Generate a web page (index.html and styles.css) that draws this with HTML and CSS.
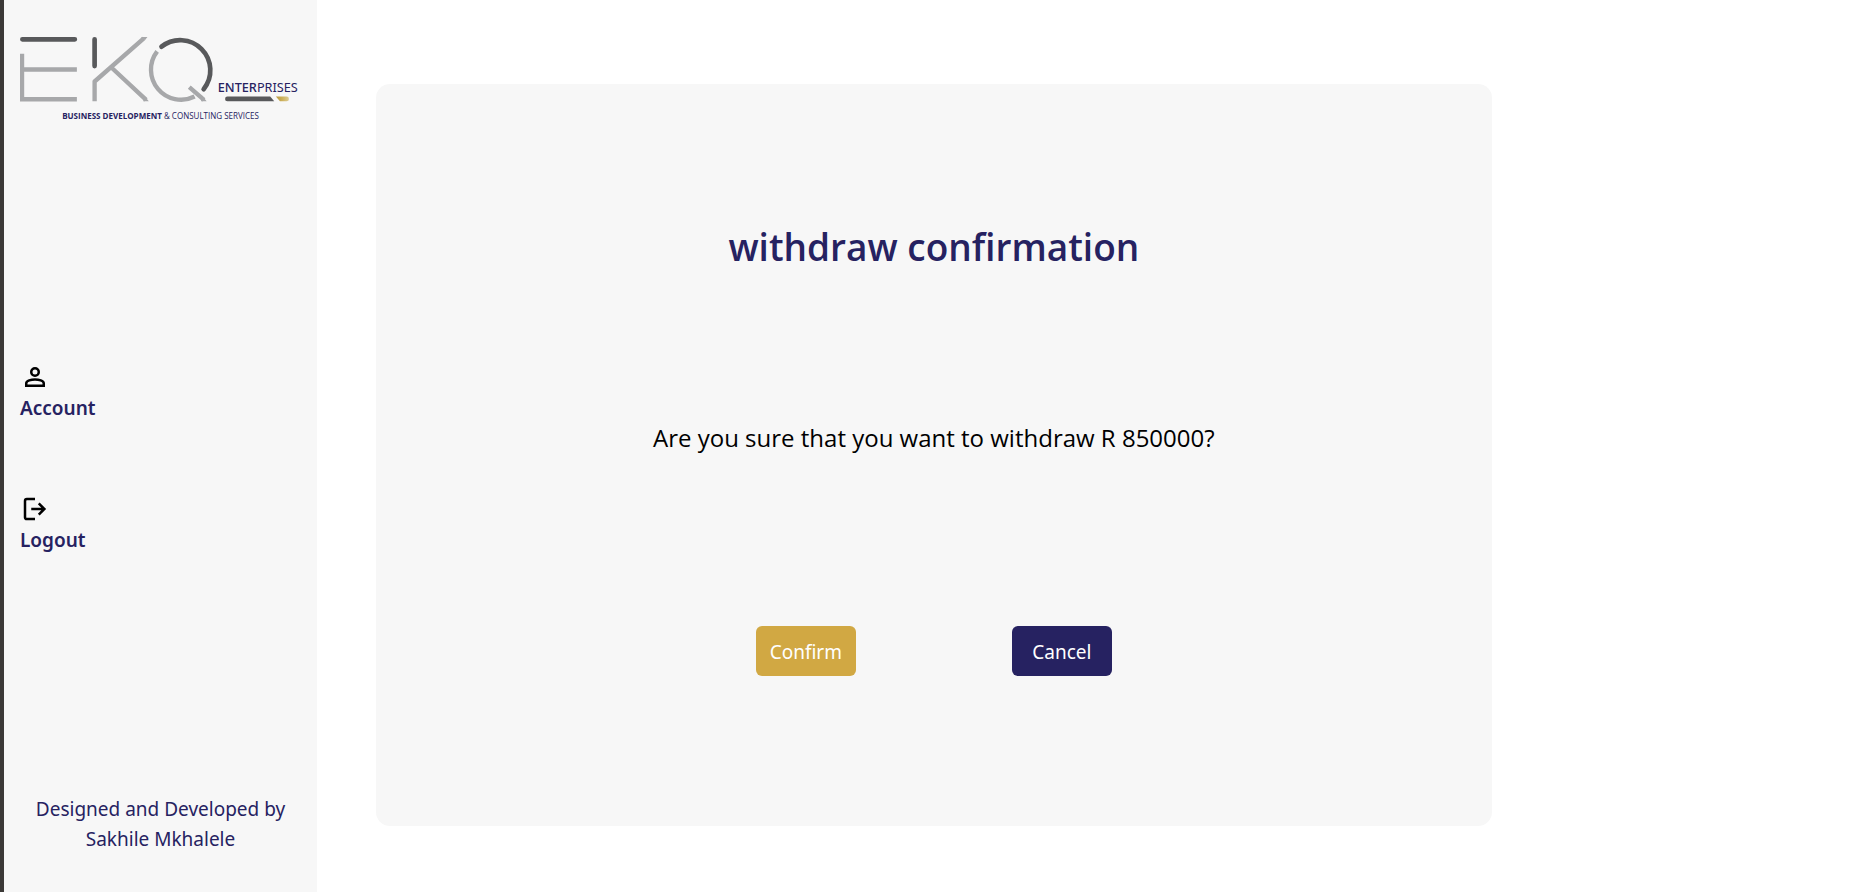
FILE: index.html
```html
<!DOCTYPE html>
<html lang="en">
<head>
<meta charset="utf-8">
<meta name="viewport" content="width=device-width, initial-scale=1">
<title>Withdraw confirmation</title>
<link rel="stylesheet" href="styles.css">
</head>
<body>
<aside class="sidebar">
  <svg class="logo" viewBox="60 45 840 260" role="img" aria-label="EKQ Enterprises">
    <defs>
      <linearGradient id="gold" x1="0" x2="1"><stop offset="0" stop-color="#b8983e"/><stop offset=".5" stop-color="#cdb15c"/><stop offset="1" stop-color="#dccb94"/></linearGradient>
    </defs>
    <g fill="none" stroke="#a7a8aa" stroke-width="13">
      <path d="M66 101V237H230M66 148H230"/>
      <path d="M283 243V184L430 55M334 143L437 239" stroke-linejoin="round"/>
      <path d="M470 94A90 90 0 0 0 582 229M566 201L610 239"/>
      <path fill="#a7a8aa" stroke="none" d="M421 51H441L434 60ZM433 228L445 243H428ZM604 226L618 243H601Z"/>
    </g>
    <g fill="none" stroke="#58595b" stroke-width="14" stroke-linecap="round">
      <path d="M67 58H224M283 58V138M483 80A90 90 0 0 1 609 207"/>
    </g>
    <path fill="#58595b" d="M680 229H808L820 243H680A7 7 0 0 1 680 229Z"/>
    <path fill="url(#gold)" d="M825 229H857A7 7 0 0 1 857 243H837Z"/>
    <text class="logo-name" x="651" y="216"><tspan class="strong">ENTER</tspan>PRISES</text>
    <text class="logo-tagline" x="186" y="297"><tspan class="bold">BUSINESS DEVELOPMENT</tspan> &amp; CONSULTING SERVICES</text>
  </svg>
  <nav class="menu">
    <a class="menu-link" href="#account">
      <svg class="icon" viewBox="0 0 24 24" aria-hidden="true"><circle cx="12" cy="8" r="3"/><path d="M5 19v-2c0-2 4-3.100 7-3.100s7 1.100 7 3.100v2z"/></svg>
      Account
    </a>
    <a class="menu-link" href="#logout">
      <svg class="icon" viewBox="0 0 24 24" aria-hidden="true"><path d="M12 4H5.500Q4 4 4 5.500V18.500Q4 20 5.500 20H12M9 12H19.500M15 7.500l4.500 4.500L15 16.500"/></svg>
      Logout
    </a>
  </nav>
  <footer class="credit">Designed and Developed by Sakhile Mkhalele</footer>
</aside>
<main class="content">
  <section class="card">
    <h1 class="title">withdraw confirmation</h1>
    <p class="question">Are you sure that you want to withdraw R 850000?</p>
    <div class="actions">
      <button class="button confirm" type="button">Confirm</button>
      <button class="button cancel" type="button">Cancel</button>
    </div>
  </section>
</main>
</body>
</html>
```
FILE: styles.css
```css
* {
  box-sizing: border-box;
}

body {
  margin: 0;
  min-height: 100vh;
  display: flex;
  border-left: 4px solid #3b3937;
  background: #fff;
  color: #000;
  font-family: "Noto Sans", "Open Sans", sans-serif;
  font-size: 19px;
  line-height: 30px;
}

.sidebar {
  flex: 0 0 313px;
  display: flex;
  flex-direction: column;
  justify-content: space-between;
  padding: 35px 16px 38px;
  background: #f7f7f7;
  color: #262261;
}

.logo {
  width: 100%;
  display: block;
}

.logo-name {
  fill: #262261;
  font-size: 38px;
}

.logo-tagline {
  fill: #262261;
  font-family: "Open Sans", sans-serif;
  font-size: 24px;
}

.strong {
  font-weight: 500;
}

.bold {
  font-weight: 700;
}

.menu {
  display: grid;
  gap: 71px;
  justify-items: start;
  padding-top: 2px;
}

.menu-link {
  display: grid;
  gap: 1px;
  color: inherit;
  font-weight: 600;
  text-decoration: none;
}

.icon {
  width: 30px;
  height: 30px;
  fill: none;
  stroke: #000;
  stroke-width: 2;
}

.credit {
  text-align: center;
}

.content {
  flex: 1;
  padding: 84px 59px 66px;
}

.card {
  width: 78.4%;
  height: 100%;
  display: flex;
  flex-direction: column;
  align-items: center;
  justify-content: space-between;
  padding: 140px 24px 150px;
  border-radius: 14px;
  background: #f7f7f7;
}

.title {
  margin: 0;
  color: #262261;
  font-family: "Open Sans", sans-serif;
  font-size: 37px;
  font-weight: 600;
  line-height: 46px;
}

.question {
  margin: 0 0 20px;
  font-family: "Open Sans", sans-serif;
  font-size: 24px;
  line-height: 36px;
}

.actions {
  display: flex;
  gap: 156px;
}

.button {
  width: 100px;
  height: 50px;
  padding: 2px 0 0;
  border: 0;
  border-radius: 6px;
  color: #fff;
  font: inherit;
}

.confirm {
  background: #d1a843;
}

.cancel {
  background: #262261;
}
```
